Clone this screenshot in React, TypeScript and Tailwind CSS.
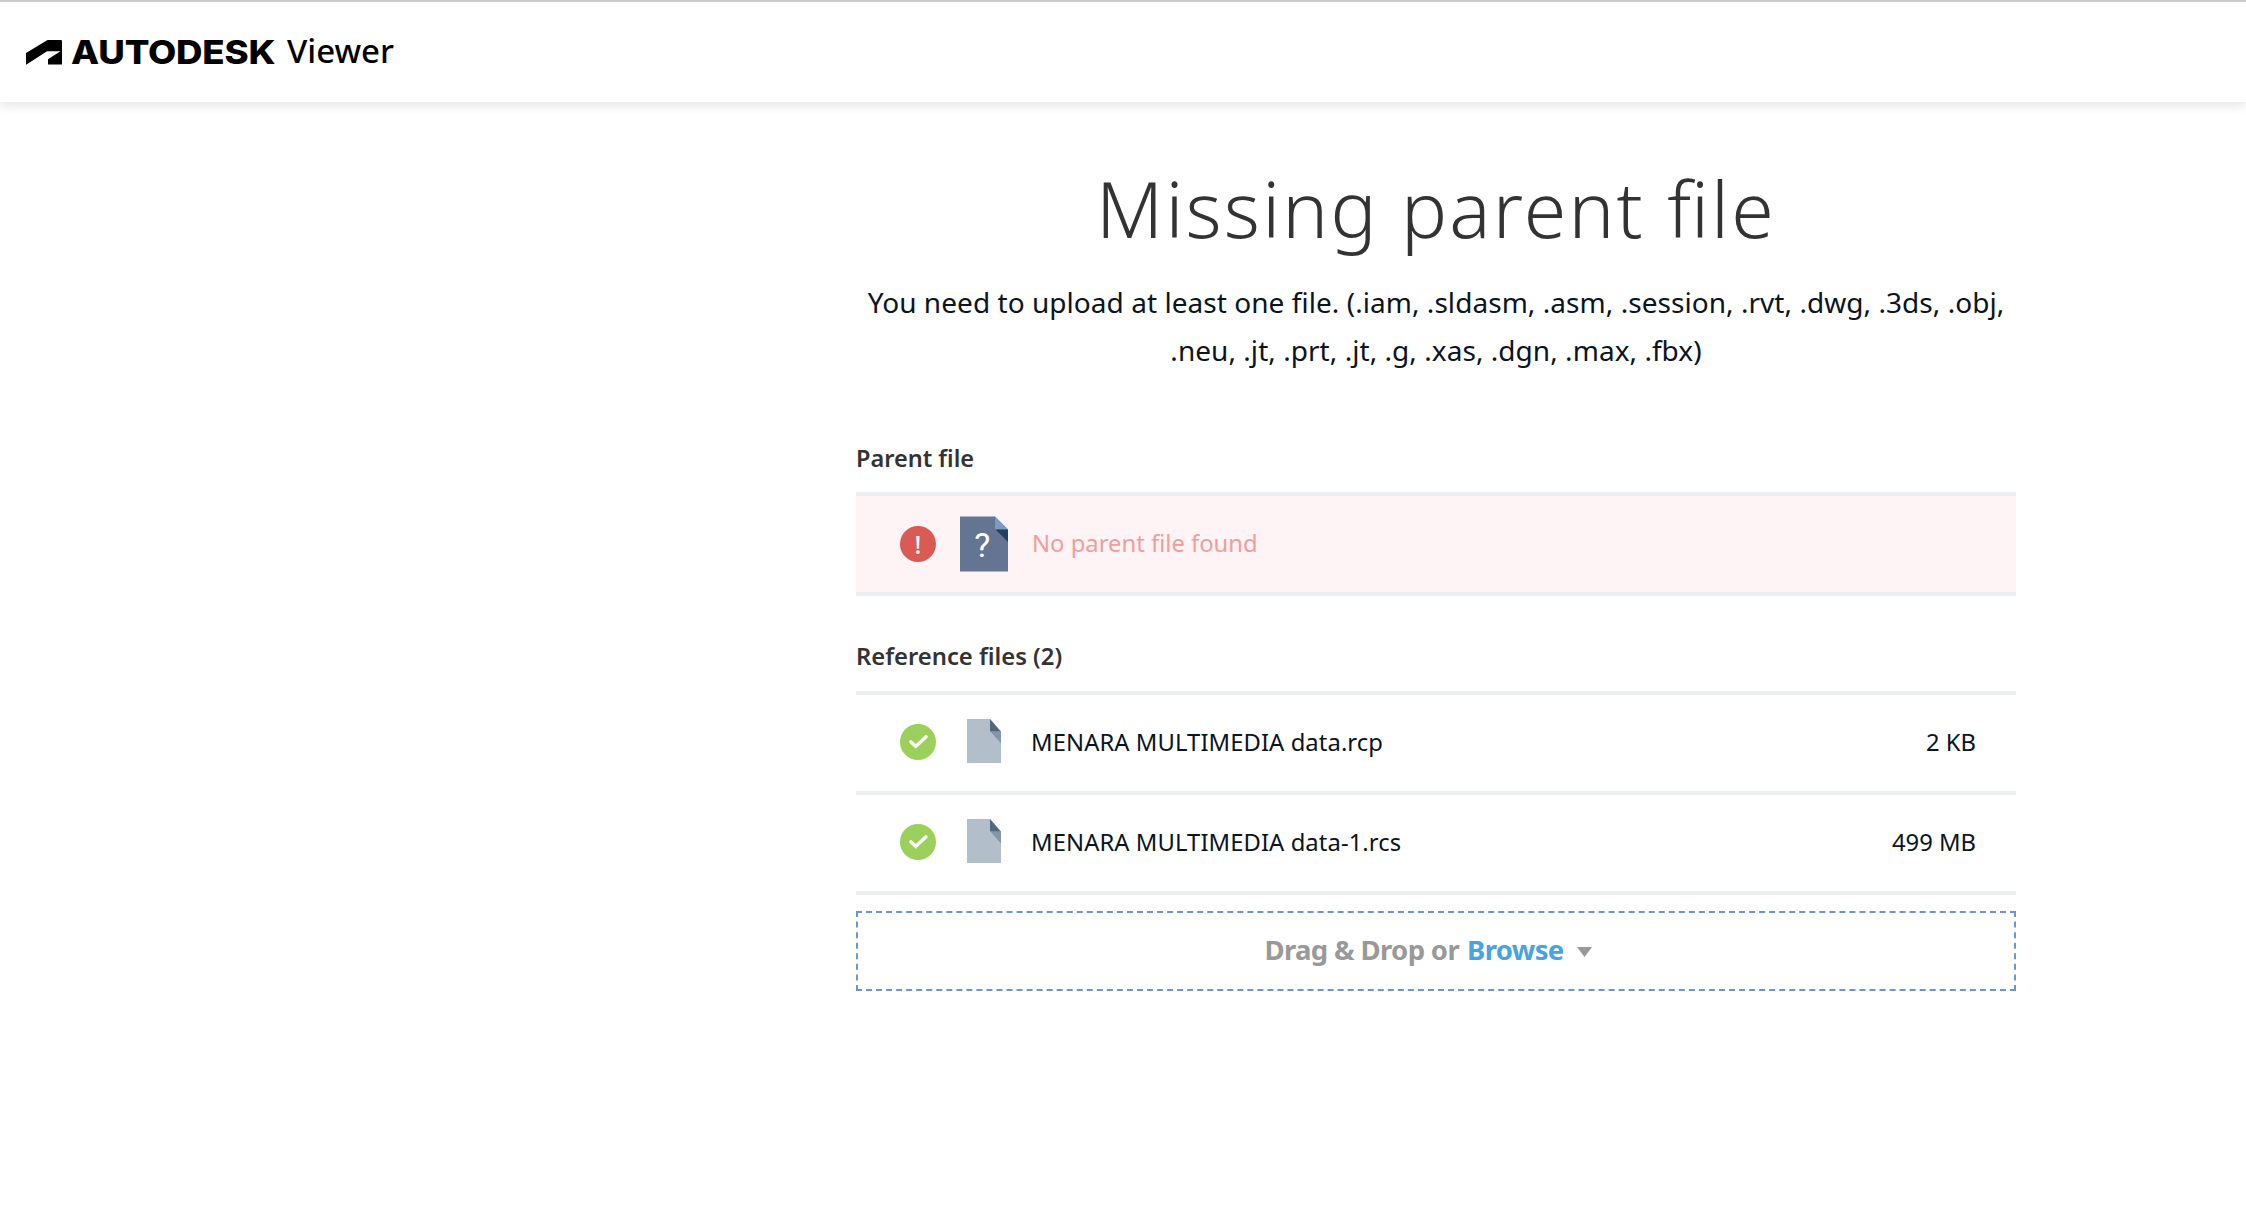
import React from "react";

function Logo() {
  return (
    <div className="flex items-center whitespace-nowrap text-black">
      <svg className="h-[25px] w-[36px] shrink-0" viewBox="0 0 36 25">
        <path d="M0 13 L21.500 0 H35 Q36 0 36 1 V24.500 H22 V19.200 L34.500 11.200 H21 L0.500 24.500 H0 Z" />
      </svg>
      <span className="ml-[9px] w-[189px] origin-left scale-x-[1.11] font-['Inter',sans-serif] text-[33px] leading-[40px] font-extrabold tracking-[-0.2px]">
        AUTODESK
      </span>
      <span className="mt-[-2px] ml-[27px] text-[33px] leading-[40px] font-medium">Viewer</span>
    </div>
  );
}

function SuccessIcon() {
  return (
    <svg className="size-9 shrink-0" viewBox="0 0 36 36">
      <circle cx="18" cy="18" r="18" fill="#9bd05c" />
      <path d="M10.800 17.800 L15.800 22.500 L26 12.700" fill="none" stroke="#fff" strokeWidth="3.400" strokeLinecap="round" />
    </svg>
  );
}

function FileIcon() {
  return (
    <svg className="h-11 w-[34px] shrink-0" viewBox="0 0 34 44">
      <path d="M0 0 H23 L34 12.500 V44 H0 Z" fill="#b2bfcb" />
      <path d="M23 12 H34 V24.500 Z" fill="#8496a9" />
      <path d="M23 0 L33.500 12.300 H23 Z" fill="#54687b" />
    </svg>
  );
}

function MissingFileIcon() {
  return (
    <svg className="h-14 w-12 shrink-0" viewBox="0 0 48 56">
      <path d="M0 0.500 H35 L48 13.500 V55.500 H0 Z" fill="#637592" />
      <path d="M35 0.500 L48 13.500 H35 Z" fill="#7f9ac0" />
      <path d="M35.500 13.500 H48 V26 Z" fill="#243f60" />
      <text x="22.300" y="41" textAnchor="middle" fill="#fff" fontSize="34" fontFamily="Roboto, sans-serif">
        ?
      </text>
    </svg>
  );
}

function FileRow({ name, size }: { name: string; size: string }) {
  return (
    <li className="flex h-[100px] items-center border-b-4 border-[#ebeff2] pr-10 pb-[2px] pl-11 text-[23.8px] text-[#0b1420]">
      <SuccessIcon />
      <div className="mb-[2px] ml-[31px]">
        <FileIcon />
      </div>
      <span className="mt-[2px] ml-[30px] tracking-[0.08px]">{name}</span>
      <span className="mt-[2px] ml-auto">{size}</span>
    </li>
  );
}

export default function App() {
  return (
    <div className="min-h-screen overflow-hidden bg-white font-['Noto_Sans',sans-serif]">
      <header className="flex h-[102px] items-center border-t-2 border-[#cccccc] bg-white pl-[26px] shadow-[0_4px_10px_rgba(0,0,0,0.1)]">
        <Logo />
      </header>
      <main className="ml-[856px] w-[1160px]">
        <h1 className="mt-[55px] text-center text-[77px] leading-[104px] font-light tracking-[2.2px] text-[#333333] [font-feature-settings:'liga'_1]">
          Missing parent file
        </h1>
        <p className="mt-[17px] text-center text-[28px] leading-[48px] tracking-[0.05px] whitespace-nowrap text-[#0b1420] [font-feature-settings:'liga'_1]">
          You need to upload at least one file. (.iam, .sldasm, .asm, .session, .rvt, .dwg, .3ds, .obj,
          <br />
          .neu, .jt, .prt, .jt, .g, .xas, .dgn, .max, .fbx)
        </p>

        <h2 className="mt-[68px] text-[23.5px] leading-[32px] font-semibold text-[#333333]">Parent file</h2>
        <div className="mt-[18px] flex h-[104px] items-center border-y-4 border-[#ebeff2] bg-[#fef4f5] pl-11">
          <div className="flex size-9 shrink-0 items-center justify-center rounded-full bg-[#da5a54] text-[25px] leading-none font-medium text-white">
            !
          </div>
          <div className="ml-6">
            <MissingFileIcon />
          </div>
          <span className="ml-6 text-[23.8px] text-[#f29c9b]">No parent file found</span>
        </div>

        <h2 className="mt-[44px] text-[23.8px] leading-[32px] font-semibold text-[#333333]">
          Reference files (2)
        </h2>
        <ul className="mt-[19px] border-t-4 border-[#ebeff2]">
          <FileRow name="MENARA MULTIMEDIA data.rcp" size="2 KB" />
          <FileRow name="MENARA MULTIMEDIA data-1.rcs" size="499 MB" />
        </ul>

        <div className="mt-4 flex h-20 items-center justify-center border-2 border-dashed border-[#6a96d8] pr-4 pb-[2px] text-[27.5px] font-bold tracking-[-0.65px] text-[#999999]">
          <span>Drag &amp; Drop or</span>
          <a className="ml-2 text-[#4aa3df]">Browse</a>
          <svg className="mt-[4px] ml-[13px] h-[10px] w-[15px]" viewBox="0 0 15 10">
            <path d="M0 0 H15 L7.500 10 Z" fill="#999" />
          </svg>
        </div>
      </main>
    </div>
  );
}
